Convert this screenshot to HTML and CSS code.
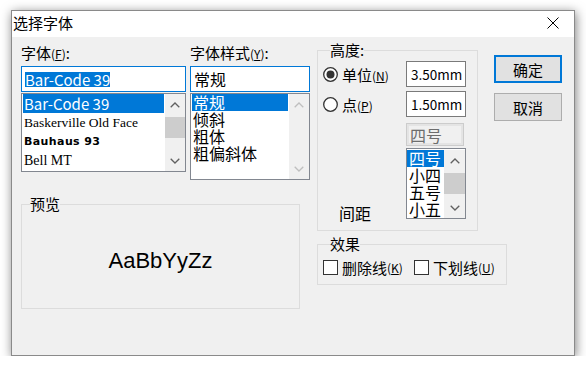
FILE: index.html
```html
<!DOCTYPE html>
<html lang="zh-CN">
<head>
    <meta charset="UTF-8">
    <title>选择字体</title>
    <link rel="stylesheet" href="styles.css">
</head>
<body>

<div class="dialog">
    <div class="titlebar">
        <span class="title">选择字体</span>
        <svg class="close" width="12" height="12" viewBox="0 0 12 12">
            <path d="M0.5 0.5 L11.5 11.5 M11.5 0.5 L0.5 11.5" stroke="#000" stroke-width="1" fill="none"/>
        </svg>
    </div>

    <div class="content">
        <div class="left">
            <div class="pickers">
                <!-- Fonte -->
                <div class="picker font-picker">
                    <div class="label">字体<span class="acc">(<u>F</u>)</span>:</div>
                    <div class="textbox focused"><span class="sel">Bar-Code 39</span></div>
                    <div class="listbox">
                        <ul class="items font-list">
                            <li class="selected">Bar-Code 39</li>
                            <li class="f-baskerville">Baskerville Old Face</li>
                            <li class="f-bauhaus">Bauhaus 93</li>
                            <li class="f-bell">Bell MT</li>
                        </ul>
                        <div class="scrollbar">
                            <div class="arrow">
                                <svg width="10" height="6" viewBox="0 0 10 6"><path d="M0.7 5.3 L5 1 L9.3 5.3" stroke="#606060" stroke-width="1.3" fill="none"/></svg>
                            </div>
                            <div class="thumb"></div>
                            <div class="track"></div>
                            <div class="arrow">
                                <svg width="10" height="6" viewBox="0 0 10 6"><path d="M0.7 0.7 L5 5 L9.3 0.7" stroke="#606060" stroke-width="1.3" fill="none"/></svg>
                            </div>
                        </div>
                    </div>
                </div>

                <!-- Estilo -->
                <div class="picker style-picker">
                    <div class="label">字体样式<span class="acc">(<u>Y</u>)</span>:</div>
                    <div class="textbox focused big">常规</div>
                    <div class="listbox">
                        <ul class="items style-list">
                            <li class="selected">常规</li>
                            <li>倾斜</li>
                            <li>粗体</li>
                            <li>粗偏斜体</li>
                        </ul>
                        <div class="scrollbar">
                            <div class="arrow">
                                <svg width="10" height="6" viewBox="0 0 10 6"><path d="M0.7 5.3 L5 1 L9.3 5.3" stroke="#bfbfbf" stroke-width="1.3" fill="none"/></svg>
                            </div>
                            <div class="track"></div>
                            <div class="arrow">
                                <svg width="10" height="6" viewBox="0 0 10 6"><path d="M0.7 0.7 L5 5 L9.3 0.7" stroke="#bfbfbf" stroke-width="1.3" fill="none"/></svg>
                            </div>
                        </div>
                    </div>
                </div>
            </div>

            <fieldset class="group preview">
                <legend>预览</legend>
                <div class="sample">AaBbYyZz</div>
            </fieldset>
        </div>

        <div class="right">
            <div class="top-right">
                <fieldset class="group height">
                    <legend>高度:</legend>
                    <div class="hrow">
                        <div class="hleft">
                            <svg class="radio" width="15" height="15" viewBox="0 0 15 15"><circle cx="7.5" cy="7.5" r="6.8" fill="#fff" stroke="#333" stroke-width="1.3"/><circle cx="7.5" cy="7.5" r="4" fill="#333"/></svg>
                            <span>单位<span class="acc">(<u>N</u>)</span></span>
                        </div>
                        <div class="textbox small">3.50mm</div>
                    </div>
                    <div class="hrow row2">
                        <div class="hleft">
                            <svg class="radio" width="15" height="15" viewBox="0 0 15 15"><circle cx="7.5" cy="7.5" r="6.8" fill="#fff" stroke="#333" stroke-width="1.3"/></svg>
                            <span>点<span class="acc">(<u>P</u>)</span></span>
                        </div>
                        <div class="textbox small">1.50mm</div>
                    </div>
                    <div class="hrow row3">
                        <div class="hleft"></div>
                        <div class="combo-disabled"><span>四号</span></div>
                    </div>
                    <div class="hrow row4">
                        <div class="hleft spacing">间距</div>
                        <div class="listbox size-box">
                            <ul class="items size-list">
                                <li class="selected">四号</li>
                                <li>小四</li>
                                <li>五号</li>
                                <li>小五</li>
                            </ul>
                            <div class="scrollbar">
                                <div class="arrow">
                                    <svg width="10" height="6" viewBox="0 0 10 6"><path d="M0.7 5.3 L5 1 L9.3 5.3" stroke="#606060" stroke-width="1.3" fill="none"/></svg>
                                </div>
                                <div class="thumb"></div>
                                <div class="track"></div>
                                <div class="arrow">
                                    <svg width="10" height="6" viewBox="0 0 10 6"><path d="M0.7 0.7 L5 5 L9.3 0.7" stroke="#606060" stroke-width="1.3" fill="none"/></svg>
                                </div>
                            </div>
                        </div>
                    </div>
                </fieldset>

                <div class="buttons">
                    <div class="btn default">确定</div>
                    <div class="btn">取消</div>
                </div>
            </div>

            <fieldset class="group effects">
                <legend>效果</legend>
                <div class="checks">
                    <div class="check"><span class="box"></span>删除线<span class="acc">(<u>K</u>)</span></div>
                    <div class="check second"><span class="box"></span>下划线<span class="acc">(<u>U</u>)</span></div>
                </div>
            </fieldset>
        </div>
    </div>
</div>

</body>
</html>
```

FILE: styles.css
```css
body {
    margin: 0;
    background-color: #fff;
    font-family: "Noto Sans CJK SC", sans-serif;
    font-size: 15px;
    color: #000;
}
.dialog {
    width: 564px;
    height: 346px;
    margin: 10px 0 0 11px;
    box-sizing: border-box;
    border: 1px solid #8a8a8a;
    background-color: #f0f0f0;
    box-shadow: 1px 2px 10px rgba(0, 0, 0, 0.5);
}
.titlebar {
    height: 26px;
    background-color: #fff;
    display: flex;
    align-items: center;
    padding-left: 1px;
}
.title {
    line-height: 20px;
    margin-top: -3px;
}
.close {
    margin-left: auto;
    margin-right: 15px;
    margin-top: -2px;
}
.content {
    display: flex;
    padding: 5px 12px 0 9px;
}
.left {
    width: 289px;
}
.pickers {
    display: flex;
    gap: 4px;
}
.font-picker {
    width: 165px;
}
.style-picker {
    width: 120px;
}
.label {
    padding-top: 1px;
    line-height: 20px;
    margin-bottom: 2px;
    white-space: nowrap;
}
.acc {
    font-size: 12px;
}
.textbox {
    height: 26px;
    box-sizing: border-box;
    border: 1px solid #7a7a7a;
    background-color: #fff;
    padding: 0 3px;
    display: flex;
    align-items: center;
    white-space: nowrap;
}
.textbox.focused {
    border-color: #0078d7;
}
.textbox.big {
    font-size: 16px;
}
.textbox .sel {
    background-color: #0078d7;
    color: #fff;
    line-height: 15px;
}
.textbox.small {
    width: 60px;
    font-size: 13.5px;
    padding: 0 4px;
}
.listbox {
    margin-top: 1px;
    height: 79px;
    box-sizing: border-box;
    border: 1px solid #828790;
    background-color: #fff;
    display: flex;
}
.style-picker .listbox {
    height: 87px;
}
.items {
    list-style: none;
    margin: 0;
    padding: 0 1px;
    flex: 1;
    min-width: 0;
    white-space: nowrap;
}
.items li {
    padding-left: 1px;
}
.items li.selected {
    background-color: #0078d7;
    color: #fff;
}
.font-list li {
    height: 19px;
    line-height: 19px;
}
.style-list li,
.size-list li {
    height: 17px;
    line-height: 17px;
    font-size: 16px;
}
.f-baskerville {
    font-family: "Liberation Serif", serif;
    font-size: 13.5px;
}
.f-bauhaus {
    font-family: "DejaVu Sans", sans-serif;
    font-weight: bold;
    font-size: 11px;
    letter-spacing: 0.4px;
}
.f-bell {
    font-family: "Liberation Serif", serif;
    font-size: 14px;
}
.scrollbar {
    width: 20px;
    flex-shrink: 0;
    background-color: #f0f0f0;
    display: flex;
    flex-direction: column;
}
.arrow {
    height: 21px;
    display: flex;
    align-items: center;
    justify-content: center;
}
.thumb {
    margin-top: 2px;
    height: 21px;
    background-color: #cdcdcd;
}
.track {
    flex: 1;
}
.group {
    margin: 0;
    padding: 0;
    border: 1px solid #dcdcdc;
    min-width: 0;
}
.group legend {
    padding: 0;
    line-height: 16px;
    margin-left: 7px;
}
.preview {
    margin-top: 16px;
    width: 279px;
    box-sizing: border-box;
    padding: 36px 0 34px;
}
.preview legend {
    margin-left: 8px;
}
.sample {
    font-family: "Liberation Sans", Arial, sans-serif;
    font-size: 22px;
    line-height: 26px;
    text-align: center;
}
.right {
    margin-left: 7px;
}
.top-right {
    display: flex;
}
.height {
    width: 161px;
    box-sizing: border-box;
    padding: 3px 11px 11px 5px;
}
.hrow {
    display: flex;
    align-items: center;
}
.hleft {
    width: 83px;
    display: flex;
    align-items: center;
    gap: 4px;
    white-space: nowrap;
}
.row2 {
    margin-top: 4px;
}
.row3 {
    margin-top: 6px;
}
.row4 {
    margin-top: 2px;
    align-items: flex-end;
}
.spacing {
    padding-left: 16px;
    box-sizing: border-box;
    font-size: 16px;
    line-height: 20px;
    margin-bottom: -4px;
}
.combo-disabled {
    width: 58px;
    height: 23px;
    box-sizing: border-box;
    border: 1px solid #cccccc;
    background-color: #f0f0f0;
    box-shadow: inset 0 0 0 2px #e4e4e4;
    color: #6d6d6d;
    font-size: 16px;
    padding-left: 3px;
    display: flex;
    align-items: center;
}
.size-box {
    width: 60px;
    height: 71px;
    margin-top: 0;
    padding-top: 1px;
}
.size-box .items {
    padding: 0;
}
.size-box .items li {
    padding-left: 2px;
}
.size-box .scrollbar {
    width: 21px;
}
.buttons {
    margin-left: 16px;
    padding-top: 13px;
    display: flex;
    flex-direction: column;
    gap: 10px;
}
.btn {
    width: 68px;
    height: 28px;
    box-sizing: border-box;
    border: 1px solid #adadad;
    background-color: #e1e1e1;
    display: flex;
    align-items: center;
    justify-content: center;
}
.btn.default {
    border: 2px solid #0078d7;
}
.effects {
    margin-top: 5px;
    width: 190px;
    box-sizing: border-box;
    padding: 5px 0 7px 5px;
}
.checks {
    display: flex;
    height: 20px;
    align-items: center;
}
.check {
    display: flex;
    align-items: center;
    white-space: nowrap;
}
.check .box {
    width: 15px;
    height: 15px;
    box-sizing: border-box;
    border: 1px solid #333;
    background-color: #fff;
    margin-right: 4px;
}
.check.second {
    margin-left: 11px;
}
```
